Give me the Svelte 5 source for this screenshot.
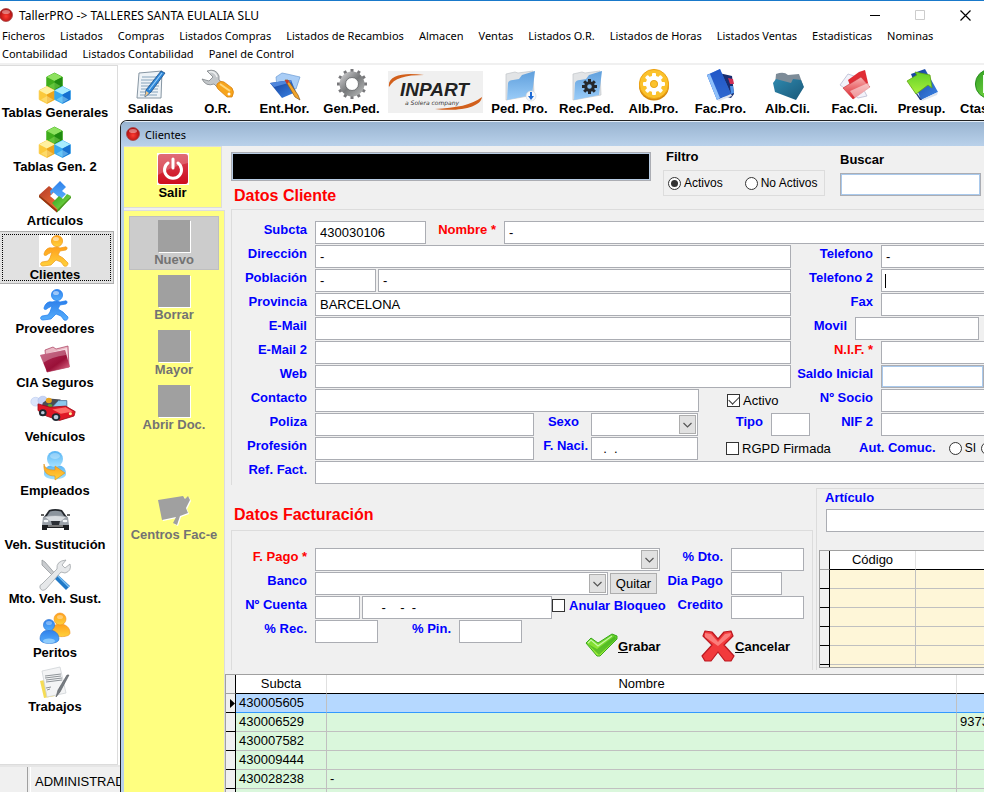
<script>
  const menu = [
    'Ficheros', 'Listados', 'Compras', 'Listados Compras', 'Listados de Recambios', 'Almacen',
    'Ventas', 'Listados O.R.', 'Listados de Horas', 'Listados Ventas', 'Estadisticas', 'Nominas',
    'Contabilidad', 'Listados Contabilidad', 'Panel de Control'
  ];

  const modules = [
    ['cubes', 'Tablas Generales'], ['cubes', 'Tablas Gen. 2'], ['blocks', 'Artículos'],
    ['runner', 'Clientes'], ['runnerBlue', 'Proveedores'], ['folderRed', 'CIA Seguros'],
    ['car', 'Vehículos'], ['person', 'Empleados'], ['sedan', 'Veh. Sustitución'],
    ['tools', 'Mto. Veh. Sust.'], ['people', 'Peritos'], ['papers', 'Trabajos']
  ];

  const toolsLeft = [['note', 'Salidas'], ['wrench', 'O.R.'], ['entry', 'Ent.Hor.'], ['gear', 'Gen.Ped.']];
  const toolsRight = [
    ['folderDown', 'Ped. Pro.'], ['folderGear', 'Rec.Ped.'], ['gold', 'Alb.Pro.'], ['books', 'Fac.Pro.'],
    ['folderTeal', 'Alb.Cli.'], ['folderFac', 'Fac.Cli.'], ['arrowDoc', 'Presup.'], ['greenDisc', 'Ctas.']
  ];

  const hexes = [
    { x: 15.5, y: 8.5, a: '#8ee260', b: '#3fae1c', c: '#1f8a10' },
    { x: 8, y: 22, a: '#fff0a0', b: '#fbc93c', c: '#eda51e' },
    { x: 23.5, y: 22, a: '#a8ecff', b: '#36a8f0', c: '#1670d0' }
  ];
  const teeth = [0, 30, 60, 90, 120, 150, 180, 210, 240, 270, 300, 330];
  const eight = [0, 45, 90, 135, 180, 225, 270, 315];

  const clients = [
    ['430005605', '', ''], ['430006529', '', '937308'], ['430007582', '', ''],
    ['430009444', '', ''], ['430028238', '-', ''], ['', '', '']
  ];
  const articles = [1, 2, 3, 4, 5, 6];

  let filter = $state('activos');
  let current = $state('Clientes');
  let selected = $state(0);
</script>

{#snippet icon(name)}
  <svg class="icon" viewBox="0 0 32 32" aria-hidden="true">
    {#if name === 'cubes'}
      {#each hexes as h}
        <g transform="translate({h.x} {h.y})">
          <path d="M0-8.500 7.800-4.500 7.800 4.500 0 8.500-7.800 4.500-7.800-4.500Z" fill={h.b} stroke={h.b} stroke-linejoin="round" stroke-width=".8" />
          <path d="M0-8.500 7.800-4.500 0-.5-7.800-4.500Z" fill={h.a} />
          <path d="M7.800-4.500 0-.5V8.500L7.800 4.500Z" fill={h.c} />
          <path d="M0 1 6 4.500 0 8-6 4.500Z" fill={h.a} opacity=".45" />
        </g>
      {/each}
    {:else if name === 'blocks'}
      <path d="M0 14 10 5 16 10 11 15 23 25 18 31Z" fill="url(#redOrange)" />
      <path d="M11 10 21 0 27 6 23 10 27 13 22 18 14 11 12 14Z" fill="url(#blue)" />
      <path d="M32 15 20 30 13 22 20 15 24 18 28 13Z" fill="url(#green)" />
      <path d="M0 14 18 29 32 15 32 17 18 31.500 0 16Z" fill="#4b9a20" />
      <path d="M0 14 18 29V31.500L0 16Z" fill="#a52a10" />
    {:else if name === 'runner' || name === 'runnerBlue'}
      <g fill={name === 'runner' ? 'url(#orange)' : 'url(#blue)'} stroke={name === 'runner' ? '#ee9a18' : '#1b7df0'} stroke-width=".7" stroke-linejoin="round">
        <path d="M13 13C9 12 6 15 5 19c0 2 2 2 4 0l4-2-2 6-2 3-6 1c-2 1-2 4 1 4l8-1 5-5 5 2 3 4c3 1 4-1 4-3l-5-5-5-3 2-4 6-1c2-1 1-4-1-3l-5 1-3-1Z" />
        <circle cx="18" cy="6" r="5.600" />
      </g>
      <ellipse cx="17" cy="4" rx="3" ry="2" fill="#fff" opacity=".5" />
    {:else if name === 'folderRed'}
      <path d="M6 7 14 4 17 6 29 3 30 24 8 29Z" fill="#e9b8c4" stroke="#a8385a" stroke-width=".7" />
      <path d="M7 11 28 5 29 22 9 28Z" fill="#f6dbe2" />
      <path d="M1 12 26 7 31 24 8 29Z" fill="url(#wine)" />
      <path d="M1 12 26 7 27 12Q12 14 4 20Z" fill="#fff" opacity=".28" />
    {:else if name === 'car'}
      <g transform="translate(-7 -3) scale(1.200 1.100)">
        <circle cx="3" cy="7" r="4" fill="#dbe5fb" stroke="#b8c8ee" stroke-width=".5" /><circle cx="9" cy="6" r="4" fill="#c6d4f6" stroke="#a9bbe8" stroke-width=".5" />
        <path d="M9 8 14 4 24 5 18 13 8 12Z" fill="#4b4d55" />
        <circle cx="14" cy="6" r="2.500" fill="#e6a11c" /><circle cx="15" cy="11" r="2" fill="#58a82c" />
        <path d="M16 13 22 6 29 6 29 12Z" fill="#8cc9ee" stroke="#446d96" stroke-width=".7" />
        <path d="M5 9 15 12 28 11 36 16 35 20 23 24 12 20 5 15Z" fill="#df1826" stroke="#9d0a18" stroke-width=".7" />
        <path d="M17 14 28 12 34 16 24 18Z" fill="#ff6d68" />
        <circle cx="9" cy="17" r="3.200" fill="#202830" /><circle cx="20" cy="21" r="3.600" fill="#202830" />
        <circle cx="9" cy="17" r="1.500" fill="#bcd" /><circle cx="20" cy="21" r="2" fill="#bcd" />
        <circle cx="32" cy="18" r="1.300" fill="#fff3a0" />
      </g>
    {:else if name === 'person'}
      <path d="M5 23c0-7 4-9 11-9s11 2 11 9c0 7-22 7-22 0Z" fill="url(#sky)" />
      <circle cx="16" cy="8" r="8" fill="url(#sky)" />
      <ellipse cx="16" cy="5" rx="5" ry="3" fill="#fff" opacity=".3" />
      <path d="M5 13c1 5 5 6 11 6v-4l10 7-10 7v-4C9 25 4 22 5 13Z" fill="url(#orange)" stroke="#d8921c" stroke-width=".6" />
    {:else if name === 'sedan'}
      <path d="M5 12 10 5Q16 3 23 5L28 12Z" fill="#23272d" />
      <path d="M8 11 11 6.500Q16 5 22 6.500L25 11Z" fill="#8b949d" />
      <path d="M2 10H5M28 10H31" stroke="#333" stroke-width="1.500" />
      <path d="M4 12Q16 8 29 12L30 20 28 22H5L3 20Z" fill="#9aa1a9" />
      <path d="M6 12Q16 10 27 12L22 16H11Z" fill="#d8dce0" />
      <path d="M12 16H21L20 20H13Z" fill="#2b2f35" />
      <ellipse cx="7" cy="16" rx="2.500" ry="1.300" fill="#f5f8fa" /><ellipse cx="26" cy="16" rx="2.500" ry="1.300" fill="#f5f8fa" />
      <path d="M3 20H30V25H25V23H8V25H3Z" fill="#1b1d20" />
      <path d="M9 20H24V22H9Z" fill="#777" />
    {:else if name === 'tools'}
      <path d="M3 1 6 3 18 17 16 19 3 6Z" fill="#c9cccf" stroke="#8b8f93" stroke-width=".7" />
      <path d="M18 15 31 27 27 31 15 19Z" fill="#1f79c8" />
      <path d="M19 17 30 28" stroke="#7fc0f2" stroke-width="1.400" />
      <path d="M27 1 23 6 26 9 31 5Q33 12 26 14L22 13 7 30Q3 33 1 29 0 26 3 25L18 10Q17 2 27 1Z" fill="#e6e8ea" stroke="#a0a4a8" stroke-width=".8" />
    {:else if name === 'people'}
      <path d="M13 19c0-6 3-8 8-8s10 3 10 9c0 5-18 5-18-1Z" fill="url(#orange)" stroke="#f0901c" stroke-width=".6" />
      <circle cx="21" cy="6" r="6" fill="url(#orange)" stroke="#f0901c" stroke-width=".6" />
      <path d="M1 26c0-6 4-9 9-9s10 3 10 9-19 6-19 0Z" fill="url(#blue)" stroke="#2c72d0" stroke-width=".6" />
      <circle cx="10" cy="12" r="5.600" fill="url(#blue)" stroke="#2c72d0" stroke-width=".6" />
      <ellipse cx="10" cy="28" rx="6" ry="2.400" fill="#a8dcff" opacity=".7" />
      <ellipse cx="10" cy="10" rx="3" ry="2" fill="#fff" opacity=".35" /><ellipse cx="21" cy="4" rx="3" ry="2" fill="#fff" opacity=".35" />
    {:else if name === 'papers'}
      <path d="M1 14 10 12 16 29 5 31Z" fill="#f5dc55" />
      <path d="M3 4 21 0 27 26 8 30Z" fill="#f3f4f5" stroke="#cfd3d7" stroke-width=".8" />
      <path d="M6 9 22 7M6 11 22 9M7 13 23 11M7 15 23 13M7 21 12 20M8 23 11 22" stroke="#8f9499" stroke-width="1" />
      <path d="M30 8 21 25 17 30 19 23 28 8Z" fill="#777d83" stroke="#54585c" stroke-width=".6" />
    {:else if name === 'note'}
      <path d="M4 4 27 2 26 29 2 29Z" fill="#eef3f7" stroke="#8796a3" stroke-width="1" />
      <path d="M7 8H25M6 11H25M6 14H24M6 17H24M6 20H23M5 23H23M5 26H22" stroke="#86a3bb" stroke-width="1" />
      <path d="M26 2 30 4 16 23 10 28 11 21Z" fill="#2c86d8" stroke="#1d4e85" stroke-width=".8" />
      <path d="M10 28 11 22 14 24Z" fill="#f0c88e" /><path d="M27 4 14 21" stroke="#9bd0fa" stroke-width="1.200" />
    {:else if name === 'wrench'}
      <path d="M5 2Q14 -1 17 7L17 11 22 15 17 20 12 15Q4 18 0 10L7 12 11 8Z" fill="#c3c7ca" stroke="#7f8488" stroke-width=".8" />
      <path d="M7 3Q13 2 15 8" fill="none" stroke="#eef0f1" stroke-width="1.500" />
      <path d="M15 15Q18 11 22 13L30 19Q33 23 30 28H25L16 20Q14 18 15 15Z" fill="#f7a51c" stroke="#d9820e" stroke-width=".8" />
      <path d="M18 15 28 22" stroke="#ffd87c" stroke-width="2" /><circle cx="27" cy="25" r="1.500" fill="#fff" />
    {:else if name === 'entry'}
      <path d="M7 8 13 4 18 5 31 8 27 20 8 18Z" fill="#a9cdf6" stroke="#6c9bd4" stroke-width=".7" />
      <path d="M1 14 22 11 27 23 13 29Z" fill="url(#navy)" />
      <path d="M1 14 22 11 23 13 5 18Z" fill="#4f86dc" />
      <path d="M16 11 19 11 29 26 31 31 26 28Z" fill="#f3a52a" stroke="#8a5a1c" stroke-width=".7" />
      <path d="M16 11 19 11 20 13 18 15Z" fill="#c83b30" />
    {:else if name === 'gear'}
      {#each teeth as t}<rect x="14.500" y="0" width="3" height="6" fill="#77777a" transform="rotate({t} 16 15)" />{/each}
      <circle cx="16" cy="15" r="9.500" fill="none" stroke="url(#steel)" stroke-width="6" />
      <circle cx="16" cy="15" r="6.500" fill="#fff" stroke="#55585a" stroke-width=".8" />
    {:else if name === 'folderDown' || name === 'folderGear'}
      <path d="M2 5 11 3 14 4 29 2 30 26 2 31Z" fill="#e2e4e6" stroke="#c0c4c8" stroke-width=".7" />
      <path d="M4 14Q5 11 9 11L15 10 18 6 31 2 28 26 3 31Z" fill="url(#folder)" />
      {#if name === 'folderDown'}
        <circle cx="27" cy="27" r="5" fill="#f7f9fb" stroke="#cfd4d8" stroke-width=".6" />
        <path d="M26 23H28V27H30L27 31 24 27H26Z" fill="#1e6bd6" />
      {:else}
        {#each eight as t}<rect x="17" y="10" width="3" height="4" fill="#25282c" transform="rotate({t} 18.5 17.5)" />{/each}
        <circle cx="18.500" cy="17.500" r="3.800" fill="none" stroke="#25282c" stroke-width="3" />
      {/if}
    {:else if name === 'gold'}
      <ellipse cx="16" cy="17" rx="15" ry="14.500" fill="#d58a0c" />
      <circle cx="16" cy="15" r="14.600" fill="#fbc22c" stroke="#eda314" />
      {#each eight as t}<rect x="14" y="4" width="4" height="6" rx="1" fill="#fff" transform="rotate({t} 16 15)" />{/each}
      <circle cx="16" cy="15" r="6" fill="none" stroke="#fff" stroke-width="4.500" />
      <circle cx="16" cy="15" r="3.600" fill="#fbc22c" stroke="#df9a10" stroke-width=".7" />
    {:else if name === 'books'}
      <path d="M14 4 27 7 29 25 26 29 18 27Z" fill="#182d70" />
      <path d="M23 9 28 10 29 15 25 15Z" fill="#cf2f55" /><path d="M25 17 28 17 29 24 26 25Z" fill="#4f93e8" />
      <path d="M2 6 15 0 26 25 12 31Z" fill="url(#blue)" /><path d="M2 6 15 0 26 25 12 31Z" fill="#173bb0" opacity=".6" />
      <path d="M2 6 5 5 15 29 12 31Z" fill="#8fc0fa" />
      <path d="M12 31 26 25 27 27 14 32Z" fill="#dfe5ef" />
    {:else if name === 'folderTeal'}
      <path d="M4 5Q12 2 16 6L27 5 31 16 20 27 3 16Z" fill="#7d8c98" />
      <path d="M1 14 4 10 19 14 21 10 29 11 32 18 24 31 3 23Z" fill="url(#teal)" />
    {:else if name === 'folderFac'}
      <path d="M1 16 9 5 18 8 28 27 19 29Z" fill="#f2f2fa" stroke="#b9bbd0" stroke-width=".8" />
      <path d="M9 11 20 3 26 1 30 18 15 27Z" fill="#e02c34" />
      <path d="M4 19 22 8 31 18 14 30Z" fill="url(#redGloss)" stroke="#c72c35" stroke-width=".6" />
      <path d="M11 22 29 14 31 19 16 29Z" fill="#fff" opacity=".5" />
    {:else if name === 'arrowDoc'}
      <path d="M5 5 19 0 32 23 15 31Z" fill="url(#navy)" /><path d="M15 31 32 23 31 26 16 32Z" fill="#dbe3ef" />
      <path d="M10 23 16 31 14 31 8 22Z" fill="#203a80" />
      <path d="M1 12 11 6 9 3 24 6 26 19 22 16 10 25Z" fill="url(#lime)" stroke="#62a412" stroke-width=".8" />
    {:else if name === 'greenDisc'}
      <circle cx="16" cy="15" r="14.600" fill="url(#green)" stroke="#2b8f20" />
      <path d="M9 6H22V24H9Z" fill="#f1fff0" /><path d="M11 10H20M11 14H20M11 18H20" stroke="#3cab30" stroke-width="2" />
    {:else if name === 'power'}
      <rect width="32" height="32" fill="#fff" />
      <rect x="1" y="1" width="30" height="30" rx="3" fill="url(#redGloss)" /><rect x="1" y="1" width="30" height="30" rx="3" fill="#c40018" opacity=".6" />
      <path d="M1 4Q1 1 4 1H28Q31 1 31 4V10Q16 13 1 22Z" fill="#fff" opacity=".2" />
      <path d="M11 10A8.500 8.500 0 1 0 21 10" fill="none" stroke="#fff" stroke-width="3" stroke-linecap="round" />
      <path d="M16 6V15" stroke="#fff" stroke-width="3" stroke-linecap="round" />
    {:else if name === 'square'}
      <rect x="1" y="1" width="32" height="32" fill="#fff" /><rect width="32" height="32" fill="#a0a0a0" />
    {:else if name === 'sign'}
      <path d="M0 4 25 0 27 3 30 0 32 4 28 12 30 17 22 20 19 29 15 27 18 21 4 24Z" fill="#fff" transform="translate(1 2)" />
      <path d="M0 4 25 0 27 3 30 0 32 4 28 12 30 17 22 20 19 29 15 27 18 21 4 24Z" fill="#a0a0a0" transform="translate(0 1)" />
    {:else if name === 'check'}
      <path d="M1 13 6 8 13 13 27 4 32 6 32 9 15 26 12 26Z" fill="url(#lime)" stroke="#38a81c" stroke-width="1" stroke-linejoin="round" />
      <path d="M12 19 30 6 31 9 14 25 3 14Z" fill="#2fa31c" opacity=".55" />
      <path d="M3 13 6 10 13 16 27 6" fill="none" stroke="#d9ffc4" stroke-width="1.200" opacity=".8" />
    {:else if name === 'cross'}
      <path d="M3 1 10 2 16 9 22 2 29 1 31 6 22 15 32 26 29 31 23 31 16 22 9 31 3 31 0 26 10 15 1 6Z" fill="#f23a3c" stroke="#bb1820" stroke-width="1.200" stroke-linejoin="round" />
      <path d="M3 3 9 4 16 12 23 4 29 3 28 6 16 16 3 7Z" fill="#ff9a96" opacity=".7" />
    {/if}
  </svg>
{/snippet}

{#snippet orb()}
  <svg class="orb" viewBox="0 0 14 14" aria-hidden="true">
    <circle cx="7" cy="7" r="6.500" fill="url(#orbRed)" stroke="#a84848" stroke-width=".8" />
    <ellipse cx="7" cy="4" rx="4" ry="2" fill="#fff" opacity=".4" />
  </svg>
{/snippet}

{#snippet drop(id, size)}
  <span class="drop {size}">
    <select {id}><option value=""></option></select>
    <svg class="arrow" viewBox="0 0 17 19" aria-hidden="true">
      <rect x=".5" y=".5" width="16" height="18" fill="#e1e1e1" stroke="#adadad" />
      <path d="M4.500 8 8.500 12 12.500 8" fill="none" stroke="#555" stroke-width="1.200" />
    </svg>
  </span>
{/snippet}

<svg class="defs" width="0" height="0" aria-hidden="true">
  <defs>
    <linearGradient id="redOrange" x2="1" y2="1"><stop stop-color="#b03a28" /><stop offset="1" stop-color="#ff7a38" /></linearGradient>
    <linearGradient id="blue" x2="0" y2="1"><stop stop-color="#2f80ea" /><stop offset="1" stop-color="#56aefc" /></linearGradient>
    <linearGradient id="green" x2="1" y2="1"><stop stop-color="#2e9c22" /><stop offset="1" stop-color="#8fec4c" /></linearGradient>
    <linearGradient id="orange" x2="0" y2="1"><stop stop-color="#ff9f1c" /><stop offset="1" stop-color="#ffd23c" /></linearGradient>
    <linearGradient id="wine" x2="1" y2="1"><stop stop-color="#b5305c" /><stop offset=".6" stop-color="#9a1038" /><stop offset="1" stop-color="#e77b96" /></linearGradient>
    <linearGradient id="sky" x2="0" y2="1"><stop stop-color="#58b4f4" /><stop offset="1" stop-color="#a5e2ff" /></linearGradient>
    <linearGradient id="navy" x2="1" y2="1"><stop stop-color="#123c96" /><stop offset="1" stop-color="#3c86e8" /></linearGradient>
    <linearGradient id="steel" x2="1" y2="1"><stop stop-color="#c4c4c6" /><stop offset=".5" stop-color="#77797b" /><stop offset="1" stop-color="#aeb0b0" /></linearGradient>
    <linearGradient id="folder" x2="0" y2="1"><stop stop-color="#5f9fdc" /><stop offset="1" stop-color="#9accf8" /></linearGradient>
    <linearGradient id="teal" x2="1" y2="1"><stop stop-color="#2e88ae" /><stop offset="1" stop-color="#1a5878" /></linearGradient>
    <linearGradient id="redGloss" x2="0" y2="1"><stop stop-color="#f8b3b3" /><stop offset="1" stop-color="#dc2028" /></linearGradient>
    <linearGradient id="lime" x2="0" y2="1"><stop stop-color="#62d028" /><stop offset="1" stop-color="#a8f03c" /></linearGradient>
    <radialGradient id="orbRed" cy=".6"><stop stop-color="#ff3c32" /><stop offset="1" stop-color="#b01010" /></radialGradient>
  </defs>
</svg>

<div class="app">
  <header>
    <div class="titlebar">
      {@render orb()}
      <h1>TallerPRO -&gt; TALLERES SANTA EULALIA SLU</h1>
      <div class="sys">
        <button aria-label="Minimizar"><svg viewBox="0 0 11 11"><path d="M0 5.500H10" stroke="#000" /></svg></button>
        <button aria-label="Maximizar" disabled><svg viewBox="0 0 11 11"><path d="M.5.5H9.500V9.500H.5Z" fill="none" stroke="#ccc" /></svg></button>
        <button aria-label="Cerrar"><svg viewBox="0 0 11 11"><path d="M.5.5 10.500 10.500M10.500.5.5 10.500" stroke="#000" stroke-width="1.200" /></svg></button>
      </div>
    </div>
    <nav class="menu">
      {#each menu as item}<button>{item}</button>{/each}
    </nav>
  </header>

  <div class="workspace">
    <div class="left">
      <nav class="modules">
        {#each modules as [pic, name]}
          <button class:current={current === name} onclick={() => (current = name)}>
            {@render icon(pic)}<span>{name}</span>
          </button>
        {/each}
      </nav>
      <footer><span class="cell"></span><span class="user">ADMINISTRADOR</span></footer>
    </div>

    <div class="right">
      <nav class="toolbar">
        {#each toolsLeft as [pic, name]}
          <button>{@render icon(pic)}<span>{name}</span></button>
        {/each}
        <button class="brand">
          <svg viewBox="0 0 95 42" aria-label="INPART a Solera company">
            <rect width="95" height="42" fill="#f0f0f0" />
            <path d="M1 16C-1 4 16 1 36 4 17 4 6 7 1 16Z" fill="#d2601c" />
            <path d="M94 26C93 36 72 41 47 38 68 37 84 34 94 26Z" fill="#d2601c" />
            <text x="12" y="25" class="logo">INPART</text>
            <text x="17" y="34" class="tag">a Solera company</text>
          </svg>
        </button>
        {#each toolsRight as [pic, name]}
          <button>{@render icon(pic)}<span>{name}</span></button>
        {/each}
      </nav>

      <section class="window">
        <div class="caption">{@render orb()}<h2>Clientes</h2></div>
        <div class="client">
          <aside>
            <div class="exit"><button>{@render icon('power')}<span>Salir</span></button></div>
            <div class="actions">
              <button class="hot" disabled>{@render icon('square')}<span>Nuevo</span></button>
              <button disabled>{@render icon('square')}<span>Borrar</span></button>
              <button disabled>{@render icon('square')}<span>Mayor</span></button>
              <button disabled>{@render icon('square')}<span>Abrir Doc.</span></button>
              <button class="apart" disabled>{@render icon('sign')}<span>Centros Fac-e</span></button>
            </div>
          </aside>

          <main>
            <div class="head">
              <div class="who">
                <input class="banner" aria-label="Cliente" readonly />
                <h3>Datos Cliente</h3>
              </div>
              <div class="filter" role="radiogroup" aria-labelledby="filtro">
                <span id="filtro" class="black">Filtro</span>
                <div class="choices">
                  <label><input type="radio" bind:group={filter} value="activos" />Activos</label>
                  <label><input type="radio" bind:group={filter} value="no" />No Activos</label>
                </div>
              </div>
              <div class="search">
                <label class="black" for="buscar">Buscar</label>
                <input id="buscar" class="glow" />
              </div>
            </div>

            <div class="panel">
              <div class="row">
                <label class="name" for="subcta">Subcta</label>
                <input id="subcta" class="w111" value="430030106" />
                <label class="name req mid" for="nombre">Nombre *</label>
                <input id="nombre" class="fill" value="-" />
              </div>
              <div class="row">
                <label class="name" for="dir">Dirección</label><input id="dir" class="w476" value="-" />
                <label class="name side" for="tel">Telefono</label><input id="tel" class="fill" value="-" />
              </div>
              <div class="row">
                <label class="name" for="cp">Población</label>
                <span class="pair"><input id="cp" class="w61" value="-" /><input class="grow" aria-label="Población" value="-" /></span>
                <label class="name side" for="tel2">Telefono 2</label>
                <span class="fill focus"><input id="tel2" class="grow" /><i class="caret"></i></span>
              </div>
              <div class="row">
                <label class="name" for="prov">Provincia</label><input id="prov" class="w476" value="BARCELONA" />
                <label class="name side" for="fax">Fax</label><input id="fax" class="fill" />
              </div>
              <div class="row">
                <label class="name" for="mail">E-Mail</label><input id="mail" class="w476" />
                <label class="name short" for="movil">Movil</label><input id="movil" class="w124" />
              </div>
              <div class="row">
                <label class="name" for="mail2">E-Mail 2</label><input id="mail2" class="w476" />
                <label class="name side req" for="nif">N.I.F. *</label><input id="nif" class="fill" />
              </div>
              <div class="row">
                <label class="name" for="web">Web</label><input id="web" class="w476" />
                <label class="name side" for="saldo">Saldo Inicial</label><input id="saldo" class="fill glow flush" />
              </div>
              <div class="row">
                <label class="name" for="contacto">Contacto</label><input id="contacto" class="w384" />
                <label class="check"><input type="checkbox" checked />Activo</label>
                <label class="name auto" for="socio">Nº Socio</label><input id="socio" class="fill" />
              </div>
              <div class="row">
                <label class="name" for="poliza">Poliza</label><input id="poliza" class="w219" />
                <label class="name sexo" for="sexo">Sexo</label>{@render drop('sexo', 'w107')}
                <label class="name tipo" for="tipo">Tipo</label><input id="tipo" class="w39" />
                <label class="name auto" for="nif2">NIF 2</label><input id="nif2" class="fill" />
              </div>
              <div class="row">
                <label class="name" for="prof">Profesión</label><input id="prof" class="w219" />
                <label class="name naci" for="naci">F. Naci.</label><input id="naci" class="w107" value="  .  ." />
                <label class="check"><input type="checkbox" />RGPD Firmada</label>
                <span class="consent" role="radiogroup" aria-labelledby="aut">
                  <span id="aut" class="name">Aut. Comuc.</span>
                  <label><input type="radio" name="aut" />SI</label>
                  <label><input type="radio" name="aut" checked />NO</label>
                </span>
              </div>
              <div class="row">
                <label class="name" for="ref">Ref. Fact.</label><input id="ref" class="fill" />
              </div>
            </div>

            <div class="lower">
              <div class="billing">
                <h3>Datos Facturación</h3>
                <div class="panel closed">
                  <div class="row">
                    <label class="name req" for="pago">F. Pago *</label>{@render drop('pago', 'w345')}
                    <label class="name auto" for="dto">% Dto.</label><span class="last"><input id="dto" class="w73" /></span>
                  </div>
                  <div class="row">
                    <label class="name" for="banco">Banco</label>{@render drop('banco', 'w293')}
                    <button class="quit">Quitar</button>
                    <label class="name auto" for="dia">Dia Pago</label><span class="last"><input id="dia" class="w51" /></span>
                  </div>
                  <div class="row">
                    <label class="name" for="cuenta">Nº Cuenta</label>
                    <span class="account"><input id="cuenta" class="w45" /><input class="w190" aria-label="Número de cuenta" value="    -    -  -" /></span>
                    <label class="unlock"><input type="checkbox" />Anular Bloqueo</label>
                    <label class="name auto" for="credito">Credito</label><span class="last"><input id="credito" class="w73" /></span>
                  </div>
                  <div class="row">
                    <label class="name" for="rec">% Rec.</label><input id="rec" class="w63" />
                    <label class="name pin" for="pin">% Pin.</label><input id="pin" class="w63" />
                    <span class="submit">
                      <button>{@render icon('check')}<span><u>G</u>rabar</span></button>
                      <button>{@render icon('cross')}<span><u>C</u>ancelar</span></button>
                    </span>
                  </div>
                </div>
              </div>

              <div class="article">
                <label for="articulo">Artículo</label>
                <input id="articulo" />
                <div class="frame">
                  <table>
                    <colgroup><col class="gut" /><col class="code" /><col /></colgroup>
                    <thead><tr><th class="gutter"></th><th>Código</th><th></th></tr></thead>
                    <tbody>{#each articles as a (a)}<tr><td class="gutter"></td><td></td><td></td></tr>{/each}</tbody>
                  </table>
                </div>
              </div>
            </div>

            <div class="frame clients">
              <table>
                <colgroup><col class="gut" /><col class="sub" /><col class="nom" /><col /></colgroup>
                <thead><tr><th class="gutter"></th><th>Subcta</th><th>Nombre</th><th></th></tr></thead>
                <tbody>
                  {#each clients as [code, name, phone], i}
                    <tr class:selected={selected === i} onclick={() => (selected = i)}>
                      <td class="gutter">{#if selected === i}<svg viewBox="0 0 5 9"><path d="M0 0 5 4.500 0 9Z" /></svg>{/if}</td>
                      <td>{code}</td><td>{name}</td><td>{phone}</td>
                    </tr>
                  {/each}
                </tbody>
              </table>
            </div>
          </main>
        </div>
      </section>
    </div>
  </div>
</div>

<style>
  :global(body) { margin: 0; overflow: hidden; }
  .app, .app * { box-sizing: border-box; }
  .defs { position: absolute; }
  .app {
    height: 100vh; display: flex; flex-direction: column; overflow: hidden;
    background: #fff; color: #000; font: 13px "Liberation Sans", Arial, sans-serif;
  }
  button { font: inherit; color: inherit; background: none; border: 0; padding: 0; margin: 0; }
  h1, h2, h3 { margin: 0; font-weight: 400; }
  svg { display: block; flex: none; }
  .icon { width: 32px; height: 32px; overflow: visible; }
  .orb { width: 14px; height: 14px; }

  header { flex: none; border-top: 1px solid #1979ca; border-bottom: 2px solid #f0f0f0; font-family: "Noto Sans", "Open Sans", sans-serif; }
  .titlebar { height: 26px; display: flex; align-items: center; padding-top: 2px; }
  .titlebar .orb { margin-left: -1px; }
  h1 { font-size: 12px; margin-left: 6px; }
  .sys { display: flex; margin: 0 -4px 0 auto; }
  .sys button { width: 45px; height: 24px; display: flex; align-items: center; justify-content: center; }
  .sys svg { width: 11px; height: 11px; }
  .menu { display: flex; flex-wrap: wrap; column-gap: 15px; padding-left: 2px; font-size: 11px; line-height: 18px; }
  .menu button { height: 18px; white-space: nowrap; }

  .workspace { flex: 1; min-height: 0; display: flex; }
  .left { width: 120px; flex: none; display: flex; flex-direction: column; overflow: hidden; }
  .modules { flex: 1; width: 118px; border: 1px solid #dcdcdc; border-left: 0; padding-top: 3px; display: flex; flex-direction: column; gap: 1px; font-weight: 700; }
  .modules button { width: 115px; height: 53px; display: flex; flex-direction: column; align-items: center; padding: 4px 3px 0 0; margin-left: -1px; white-space: nowrap; line-height: 16px; }
  .modules .current { background: #e1e1e1; border: 1px solid #adadad; padding-top: 3px; outline: 1px dotted #000; outline-offset: -4px; }
  .current .icon { background: #fff; }
  footer { height: 27px; flex: none; background: #f0f0f0; border-top: 2px solid #e6e6e6; display: flex; }
  .cell { width: 28px; flex: none; border-right: 1px solid #a0a0a0; }
  .user { margin-left: 2px; padding: 0 0 0 4px; border-left: 1px solid #fff; line-height: 30px; }

  .right { flex: 1; min-width: 0; display: flex; flex-direction: column; overflow: hidden; }
  .toolbar { height: 55px; flex: none; display: flex; margin-left: -3px; padding-top: 4px; font-weight: 700; overflow: hidden; }
  .toolbar button { width: 67px; flex: none; display: flex; flex-direction: column; align-items: center; line-height: 16px; white-space: nowrap; }
  .toolbar button:last-child { align-items: flex-start; padding-left: 5px; }
  .toolbar button:last-child :global(.icon) { margin-left: 14px; }
  .toolbar .brand { width: 101px; padding-top: 2px; }
  .brand svg { width: 95px; height: 42px; }
  .logo { font: italic 700 19px "Liberation Sans", sans-serif; fill: #222; }
  .tag { font: italic 6px "DejaVu Sans", sans-serif; fill: #333; }

  .window { flex: 1; min-height: 0; display: flex; flex-direction: column; border: 1px solid #222; border-right: 0; border-bottom: 0; border-top-left-radius: 7px; background: #b9d1ea; padding-left: 3px; overflow: hidden; }
  .caption { height: 25px; flex: none; display: flex; align-items: center; gap: 5px; margin-left: -3px; border-top: 1px solid #e4eef8; background: linear-gradient(#99b4d1, #b9d1ea); padding-left: 5px; }
  h2 { font: 11px "Noto Sans", "Open Sans", sans-serif; }
  .client { flex: 1; min-height: 0; display: flex; background: #f0f0f0; }

  aside { width: 101px; flex: none; display: flex; flex-direction: column; font-weight: 700; }
  .exit { height: 62px; width: 98px; background: #ffff80; border: 1px solid #dcdcdc; border-left: 0; display: flex; justify-content: center; padding-top: 6px; margin-bottom: 2px; }
  aside button { display: flex; flex-direction: column; align-items: center; line-height: 16px; white-space: nowrap; }
  .actions { flex: 1; background: #ffff80; border: 1px solid #dcdcdc; border-left: 0; border-bottom: 0; padding: 5px 5px 0; display: flex; flex-direction: column; gap: 1px; }
  .actions button { height: 54px; padding-top: 4px; color: #737373; }
  .actions .hot { background: #ccc; border: 1px solid #bfbfbf; padding-top: 3px; }
  .actions .apart { margin-top: 55px; }

  main { flex: 1; min-width: 0; display: flex; flex-direction: column; overflow: hidden; }
  .head { display: flex; height: 63px; margin-left: 6px; }
  .who { width: 420px; padding-top: 6px; }
  h3 { color: #f00; font-size: 16px; font-weight: 700; line-height: 20px; padding-left: 3px; }
  .who h3 { padding-top: 5px; }
  input, select {
    display: block; height: 23px; margin: 0; padding: 0 4px; border: 1px solid #abadb3; border-radius: 0;
    background: #fff; color: #000; font: inherit; outline: 0; flex: none; min-width: 0;
  }
  .banner { width: 100%; height: 29px; background: #000; box-shadow: inset 0 0 0 1px #b8cce4; }
  .glow { box-shadow: inset 0 0 0 1px #a9c9ec; }
  .black { font-weight: 700; line-height: 16px; display: block; }
  .filter { margin-left: 12px; padding-top: 3px; width: 162px; }
  .filter .black { padding-left: 3px; }
  .choices { margin-top: 5px; height: 26px; border: 1px solid #dcdcdc; display: flex; gap: 22px; align-items: center; padding-left: 4px; font-size: 12px; white-space: nowrap; }
  .choices label, .consent label { display: flex; align-items: center; gap: 3px; }
  .search { margin-left: 15px; padding-top: 6px; width: 141px; }
  .search input { width: 100%; margin-top: 5px; }

  input[type='radio'], input[type='checkbox'] { appearance: none; width: 13px; height: 13px; padding: 0; border: 1px solid #333; display: grid; place-items: center; }
  input[type='radio'] { border-radius: 50%; }
  input[type='radio']:checked::before { content: ''; width: 7px; height: 7px; border-radius: 50%; background: #333; }
  input[type='checkbox']:checked::before { content: ''; width: 9px; height: 5px; border: solid #333; border-width: 0 0 1px 1px; transform: translateY(-1px) rotate(-45deg); }

  .panel { margin-left: 6px; border: 1px solid #dcdcdc; border-width: 1px 0 0 1px; padding-top: 11px; }
  .row { display: flex; height: 24px; align-items: flex-start; }
  .name { width: 75px; flex: none; margin-right: 8px; text-align: right; color: #00f; font-weight: 700; line-height: 18px; white-space: nowrap; }
  .req { color: #f00; }
  .mid { width: 70px; }
  .side { width: 82px; }
  .short { width: 56px; }
  .sexo { width: 45px; margin-right: 12px; }
  .naci { width: 54px; margin-right: 3px; }
  .tipo { width: 65px; }
  .pin { width: 73px; }
  .auto { width: auto; margin-left: auto; }
  .fill { flex: 1; margin-right: -2px; }
  .flush { margin-right: 0; }
  .grow { flex: 1; }
  .pair { width: 476px; flex: none; display: flex; gap: 2px; }
  .focus { display: flex; position: relative; }
  .caret { position: absolute; left: 4px; top: 5px; width: 1px; height: 14px; background: #000; }
  .auto + .fill { flex: 0 0 105px; }
  .w39 { width: 39px; } .w45 { width: 45px; } .w51 { width: 51px; } .w61 { width: 61px; } .w63 { width: 63px; }
  .w73 { width: 73px; } .w107 { width: 107px; } .w111 { width: 111px; } .w124 { width: 124px; } .w190 { width: 190px; }
  .w219 { width: 219px; } .w293 { width: 293px; } .w345 { width: 345px; } .w384 { width: 384px; } .w476 { width: 476px; }
  .check { display: flex; align-items: center; gap: 3px; height: 22px; margin-left: 28px; white-space: nowrap; }
  .consent { display: flex; align-items: center; gap: 5px; height: 22px; margin-left: auto; margin-right: -31px; font-size: 12px; }
  .consent .name { width: auto; font-size: 13px; }
  .drop { position: relative; flex: none; }
  .drop select { appearance: none; width: 100%; }
  .arrow { position: absolute; right: 2px; top: 2px; width: 17px; height: 19px; pointer-events: none; }

  .lower { display: flex; align-items: flex-start; }
  .billing { width: 588px; flex: none; padding-top: 20px; }
  .billing h3 { padding-left: 9px; margin-bottom: 5px; }
  .closed { border-right-width: 1px; padding: 17px 8px 0 0; height: 140px; }
  .last { width: 73px; flex: none; }
  .quit { width: 47px; height: 21px; margin: 1px 0 0 2px; background: #e1e1e1; border: 1px solid #adadad; flex: none; }
  .account { display: flex; gap: 2px; }
  .unlock { display: flex; align-items: center; gap: 4px; height: 18px; color: #00f; font-weight: 700; white-space: nowrap; }
  .submit { display: flex; justify-content: space-between; flex: 1; padding: 10px 14px 0 63px; font-weight: 700; }
  .submit button { display: flex; align-items: center; gap: 1px; height: 32px; }

  .article { flex: 1; min-width: 0; margin: 3px 0 4px 3px; border: 1px solid #dcdcdc; border-width: 1px 0 0 1px; padding-bottom: 2px; overflow: hidden; }
  .article label { display: block; padding-left: 8px; color: #00f; font-weight: 700; line-height: 18px; }
  .article input { width: 100%; margin: 2px 0 18px 9px; }
  .article .frame { height: 118px; margin-left: 2px; border-bottom: 1px solid #a0a0a0; }

  .frame { border: 1px solid #a0a0a0; border-width: 1px 0 0 1px; overflow: hidden; }
  .clients { flex: 1; min-height: 0; background: #daf7dc; }
  table { width: 100%; table-layout: fixed; border-collapse: separate; border-spacing: 0; }
  .gut { width: 10px; } .code { width: 86px; } .sub { width: 91px; } .nom { width: 630px; }
  th, td { height: 19px; padding: 0 3px; line-height: 18px; border-right: 1px solid #c0c0c0; border-bottom: 1px solid #c0c0c0; white-space: nowrap; overflow: hidden; }
  td { background: #daf7dc; }
  th { font-weight: 400; background: #fff; border-right-color: #e0e0e0; border-bottom-color: #000; }
  .article td { background: #fef6d8; }
  th:last-child, td:last-child { border-right: 0; }
  .selected td { background: #b5d8ff; border-bottom-color: #3399ff; }
  th.gutter, td.gutter { padding: 0; background: #f0f0f0; border-right: 1px solid #000; border-bottom: 1px solid #000; }
  th.gutter { border-bottom-color: #a0a0a0; }
  .gutter svg { width: 5px; height: 9px; margin-left: auto; }
</style>
